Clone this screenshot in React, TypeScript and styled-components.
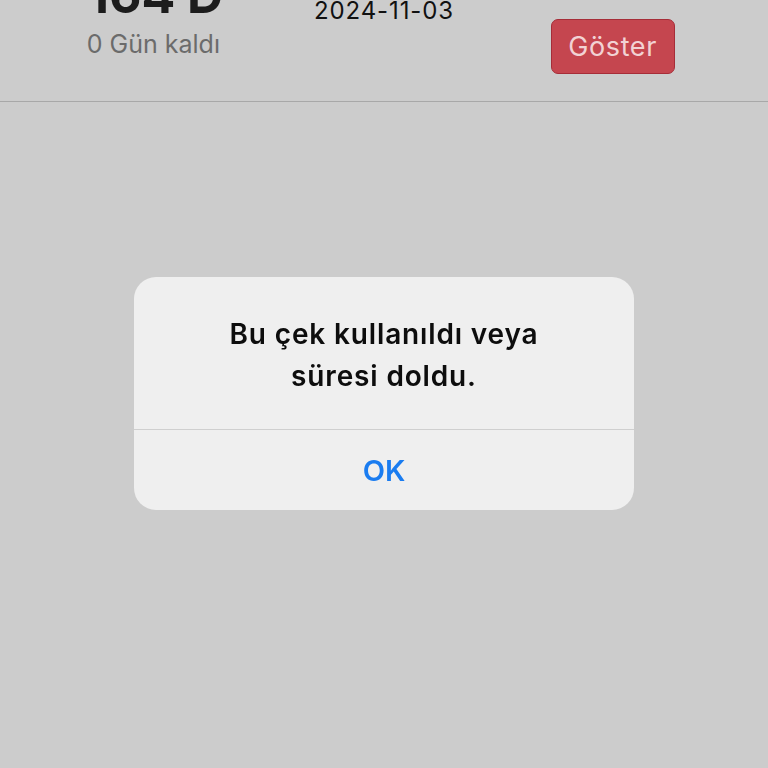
import React from 'react';
import styled, { createGlobalStyle } from 'styled-components';

const GlobalStyle = createGlobalStyle`
  html, body {
    margin: 0;
    padding: 0;
    background: #cccccc;
    font-family: Inter, "Liberation Sans", sans-serif;
    overflow: hidden;
  }
`;

const Page = styled.div`
  width: 768px;
  height: 768px;
  background: #cccccc;
`;

const Header = styled.div`
  display: grid;
  grid-template-columns: repeat(3, 1fr);
  align-items: start;
  height: 102px;
  padding: 0 41px;
  border-bottom: 1px solid #a8a8a8;
  box-sizing: border-box;
  overflow: hidden;
`;

const Column = styled.div<{ $top: number }>`
  display: flex;
  flex-direction: column;
  align-items: center;
  margin-top: ${(p) => p.$top}px;
`;

const Amount = styled.div`
  font-size: 50px;
  line-height: 48px;
  font-weight: 700;
  color: #1c1c1c;
  white-space: nowrap;
`;

const Remaining = styled.div`
  margin-top: 11px;
  margin-right: 4px;
  font-size: 25px;
  line-height: 28px;
  color: #6b6b6b;
  white-space: nowrap;
`;

const DateText = styled.div`
  font-size: 24px;
  line-height: 28px;
  color: #111;
  letter-spacing: 0.9px;
`;

const ShowButton = styled.button`
  width: 124px;
  height: 55px;
  border: 1.5px solid #a62d38;
  border-radius: 7px;
  background: #c5464f;
  color: #f2d2d4;
  font-family: inherit;
  font-size: 27px;
  letter-spacing: 0.6px;
  padding: 0;
`;

const Overlay = styled.div`
  position: fixed;
  inset: 0;
  display: flex;
  justify-content: center;
  align-items: flex-start;
  padding-top: 277px;
`;

const Dialog = styled.div`
  width: 500px;
  border-radius: 22px;
  background: #efefef;
  overflow: hidden;
`;

const Message = styled.div`
  padding: 36px 30px 32px;
  border-bottom: 1px solid #cfcfcf;
  text-align: center;
  font-size: 28px;
  line-height: 42px;
  font-weight: 600;
  letter-spacing: 0.85px;
  color: #0d0d0d;
`;

const OkButton = styled.button`
  display: block;
  width: 100%;
  height: 80px;
  border: none;
  background: transparent;
  color: #1a7cf0;
  font-family: inherit;
  font-size: 29px;
  font-weight: 600;
  padding: 0;
`;

export default function App() {
  return (
    <Page>
      <GlobalStyle />
      <Header>
        <Column $top={-29}>
          <Amount>164 Đ</Amount>
          <Remaining>0 Gün kaldı</Remaining>
        </Column>
        <Column $top={-3}>
          <DateText>2024-11-03</DateText>
        </Column>
        <Column $top={19}>
          <ShowButton>Göster</ShowButton>
        </Column>
      </Header>
      <Overlay>
        <Dialog>
          <Message>
            Bu çek kullanıldı veya
            <br />
            süresi doldu.
          </Message>
          <OkButton>OK</OkButton>
        </Dialog>
      </Overlay>
    </Page>
  );
}
